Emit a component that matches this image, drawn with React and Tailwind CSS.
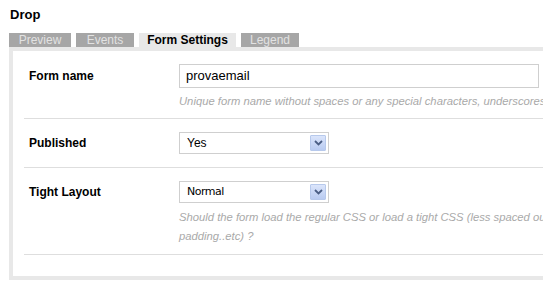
import React from "react";

function Arrow() {
  return (
    <div className="w-[16px] h-[16px] flex items-center justify-center border border-[#b7c9ec] bg-gradient-to-b from-[#dbe5fb] to-[#b9cbf1] rounded-[1px]">
      <svg width="9" height="6" viewBox="0 0 9 6">
        <path d="M1 1 L4.5 4.5 L8 1" fill="none" stroke="#4b5e85" strokeWidth="1.8" />
      </svg>
    </div>
  );
}

function Select({ value, small }) {
  return (
    <div className="w-[150px] h-[22px] shrink-0 border border-[#cfcfcf] bg-white flex items-center pl-[7px] pr-[2px]">
      <span className={`flex-1 text-black ${small ? "text-[11px] font-['DejaVu_Sans',sans-serif] tracking-[-0.5px]" : "text-[12px]"}`}>{value}</span>
      <Arrow />
    </div>
  );
}

export default function App() {
  const tabs = [
    { name: "Preview", w: "w-[62px]" },
    { name: "Events", w: "w-[58px]" },
    { name: "Form Settings", w: "w-[97px]", active: true },
    { name: "Legend", w: "w-[58px]" },
  ];
  return (
    <div className="w-[543px] h-[284px] overflow-hidden bg-white font-['Liberation_Sans',Arial,sans-serif]">
      <div className="pt-[7px] pl-[10px] text-[13px] font-bold text-black leading-[16px]">Drop</div>
      <div className="mt-[10px] ml-[9px] flex gap-[5px]">
        {tabs.map((t) => (
          <div
            key={t.name}
            className={`${t.w} h-[14px] flex items-center justify-center text-[12px] leading-[14px] ${
              t.active ? "bg-[#e8e8e8] text-black font-bold" : "bg-[#a6a6a6] text-[#e2e2e2]"
            }`}
          >
            {t.name}
          </div>
        ))}
      </div>
      <div className="ml-[9px] w-[600px] border-[4px] border-[#e8e8e8] bg-white pl-[11px] pb-[21px]">
        {/* Row 1 */}
        <div className="flex border-b border-[#dedede] pt-[13px] pb-[8px]">
          <div className="w-[155px] shrink-0 pl-[5px] h-[24px] flex items-center text-[12px] font-bold text-black">Form name</div>
          <div className="flex flex-col">
            <div className="w-[360px] h-[24px] border border-[#cfcfcf] flex items-center pl-[6px] text-[13px] text-black">provaemail</div>
            <div className="mt-[4px] text-[11.25px] italic leading-[18px] text-[#a9a9a9] whitespace-nowrap">
              Unique form name without spaces or any special characters, underscores are allowed
            </div>
          </div>
        </div>
        {/* Row 2 */}
        <div className="flex border-b border-[#dedede] pt-[13px] pb-[13px]">
          <div className="w-[155px] shrink-0 pl-[5px] h-[22px] flex items-center text-[12px] font-bold text-black">Published</div>
          <Select value="Yes" />
        </div>
        {/* Row 3 */}
        <div className="flex border-b border-[#dedede] pt-[13px] pb-[8px]">
          <div className="w-[155px] shrink-0 pl-[5px] h-[22px] flex items-center text-[12px] font-bold text-black">Tight Layout</div>
          <div className="flex flex-col">
            <Select value="Normal" small />
            <div className="mt-[5px] text-[11.25px] italic leading-[19px] text-[#a9a9a9] whitespace-nowrap">
              Should the form load the regular CSS or load a tight CSS (less spaced out, less margin,
              <br />
              padding..etc) ?
            </div>
          </div>
        </div>
      </div>
    </div>
  );
}
